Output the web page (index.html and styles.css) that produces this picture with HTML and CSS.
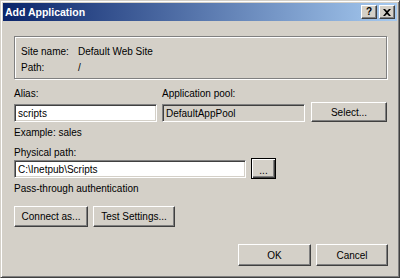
FILE: index.html
```html
<!DOCTYPE html>
<html>
<head>
<meta charset="utf-8">
<link rel="stylesheet" href="styles.css">
</head>
<body>
<div class="window">
  <div class="titlebar">
    <span class="title">Add Application</span>
    <div class="tb-btns">
      <span class="tbtn help">?</span>
      <span class="tbtn close"><svg width="8" height="7" viewBox="0 0 8 7"><path d="M0 0h2l2 2 2-2h2L5 3.5 8 7H6L4 5 2 7H0l3-3.5z" fill="#000"/></svg></span>
    </div>
  </div>
  <div class="client">
    <div class="group">
      <div class="grow"><span class="key">Site name:</span><span>Default Web Site</span></div>
      <div class="grow"><span class="key">Path:</span><span>/</span></div>
    </div>
    <div class="alias-row">
      <div class="field alias">
        <div class="label">Alias:</div>
        <div class="input">scripts</div>
      </div>
      <div class="field pool">
        <div class="label">Application pool:</div>
        <div class="input disabled">DefaultAppPool</div>
      </div>
      <div class="btn select">Select...</div>
    </div>
    <div class="hint">Example: sales</div>
    <div class="label path-label">Physical path:</div>
    <div class="path-row">
      <div class="input path">C:\Inetpub\Scripts</div>
      <div class="btn dots">...</div>
    </div>
    <div class="auth">Pass-through authentication</div>
    <div class="btn-row">
      <div class="btn connect">Connect as...</div>
      <div class="btn test">Test Settings...</div>
    </div>
    <div class="footer">
      <div class="btn ok">OK</div>
      <div class="btn cancel">Cancel</div>
    </div>
  </div>
</div>
</body>
</html>
```

FILE: styles.css
```css
html, body {
  margin: 0;
  padding: 0;
  background: #D4D0C8;
}
body {
  font-family: "Liberation Sans", Arial, sans-serif;
  font-size: 10px;
  line-height: 13px;
  color: #000;
}
.window {
  box-sizing: border-box;
  width: 400px;
  height: 278px;
  background: #D4D0C8;
  border: 1px solid;
  border-color: #D4D0C8 #404040 #404040 #D4D0C8;
  box-shadow: inset 1px 1px #fff, inset -1px -1px #808080;
  padding: 2px;
  display: flex;
  flex-direction: column;
}
.titlebar {
  height: 18px;
  flex: none;
  background: linear-gradient(to right, #0A246A, #A6CAF0);
  display: flex;
  align-items: center;
  justify-content: space-between;
}
.title {
  color: #fff;
  font-weight: bold;
  font-size: 10.5px;
  padding-left: 2px;
}
.tb-btns {
  display: flex;
  gap: 2px;
  margin-right: 2px;
}
.tbtn {
  box-sizing: border-box;
  width: 16px;
  height: 14px;
  background: #D4D0C8;
  border: 1px solid;
  border-color: #fff #404040 #404040 #fff;
  box-shadow: inset -1px -1px #808080;
  display: flex;
  align-items: center;
  justify-content: center;
  font-weight: bold;
  font-size: 10px;
  line-height: 10px;
}
.client {
  flex: 1;
  padding: 0 9px 0 11px;
  display: flex;
  flex-direction: column;
}
.group {
  box-sizing: border-box;
  margin-top: 15px;
  height: 43px;
  border: 1px solid #808080;
  box-shadow: inset 1px 1px #fff, 1px 1px #fff;
  padding: 8px 6px 0 6px;
  display: flex;
  flex-direction: column;
  gap: 3px;
  margin-right: 1px;
}
.grow {
  display: flex;
}
.key {
  width: 57px;
}
.alias-row {
  margin-top: 8px;
  display: flex;
  align-items: flex-end;
}
.field {
  display: flex;
  flex-direction: column;
  gap: 4px;
}
.alias { width: 143px; }
.pool { width: 143px; margin-left: 5px; }
.input {
  box-sizing: border-box;
  height: 18px;
  background: #fff;
  border: 1px solid;
  border-color: #808080 #fff #fff #808080;
  box-shadow: inset 1px 1px #404040, inset -1px -1px #D4D0C8;
  padding: 2px 3px 0 3px;
  white-space: nowrap;
  overflow: hidden;
}
.input.disabled {
  background: #D4D0C8;
}
.btn {
  box-sizing: border-box;
  border: 1px solid;
  border-color: #fff #404040 #404040 #fff;
  box-shadow: inset -1px -1px #808080;
  background: #D4D0C8;
  display: flex;
  align-items: center;
  justify-content: center;
  height: 21px;
}
.select {
  width: 76px;
  height: 20px;
  margin-left: 6px;
  margin-bottom: 0;
}
.hint { margin-top: 4px; }
.path-label { margin-top: 7px; }
.path-row {
  margin-top: -1px;
  display: flex;
  align-items: center;
}
.path { width: 232px; }
.dots {
  width: 25px;
  margin-left: 5px;
  border-color: #000;
  box-shadow: inset 1px 1px #fff, inset -1px -1px #404040, inset -2px -2px #808080;
  padding-top: 3px;
}
.auth { margin-top: 3px; }
.btn-row {
  margin-top: 11px;
  display: flex;
  gap: 5px;
}
.connect { width: 74px; }
.test { width: 82px; }
.footer {
  margin-top: 17px;
  display: flex;
  justify-content: flex-end;
  gap: 5px;
}
.footer .btn { height: 22px; }
.ok { width: 73px; }
.cancel { width: 72px; }
```
